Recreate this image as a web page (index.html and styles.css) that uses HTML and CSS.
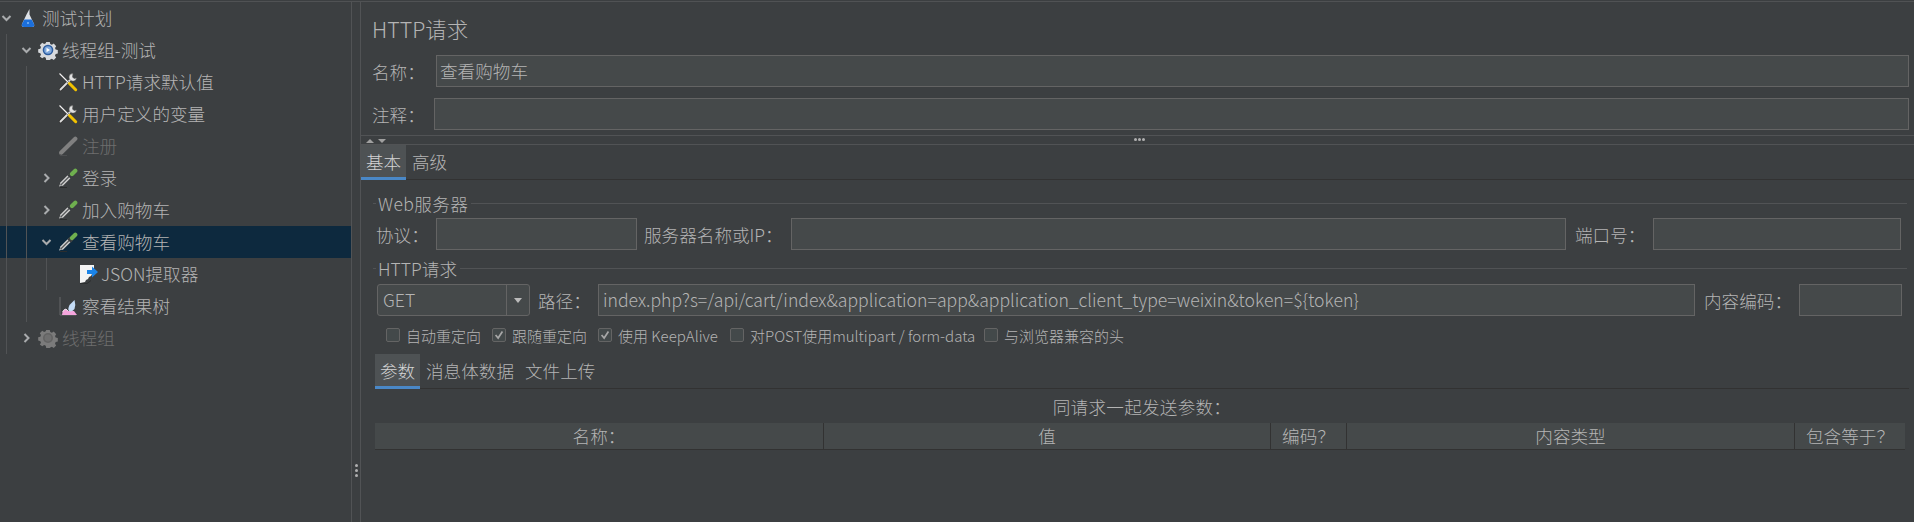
FILE: index.html
```html
<!DOCTYPE html>
<html lang="zh">
<head>
<meta charset="utf-8">
<title>HTTP请求</title>
<link rel="stylesheet" href="styles.css">
</head>
<body>
<svg class="defs" width="0" height="0" aria-hidden="true">
  <defs>
    <symbol id="chev-down" viewBox="0 0 12 12"><path d="M2 4l4 4 4-4" fill="none" stroke="#a9abad" stroke-width="2"/></symbol>
    <symbol id="chev-right" viewBox="0 0 12 12"><path d="M4 2l4 4-4 4" fill="none" stroke="#a9abad" stroke-width="2"/></symbol>
    <symbol id="flask" viewBox="0 0 20 20">
      <path d="M8.500 6.500L11.500 1v5.500L16 16q1 3-2 3H6q-3 0-2-3z" fill="#dde1e6"/>
      <path d="M6.300 11.500h7.400L16 16q1 3-2 3H6q-3 0-2-3z" fill="#1b6fdc"/>
      <circle cx="10" cy="15" r="1" fill="#7fb6f2"/>
    </symbol>
    <symbol id="gear" viewBox="0 0 20 20">
      <path d="M8 1h4l.5 2.400 1.800.8 2.100-1.300 2.700 2.800-1.300 2 .7 1.800 2.400.6v3.800l-2.400.6-.7 1.800 1.300 2-2.700 2.800-2.100-1.300-1.800.8L12 21H8l-.5-2.400-1.800-.8-2.100 1.300L.9 17.300l1.300-2-.7-1.800L-.9 12.900V9.100l2.400-.6.700-1.800-1.300-2L3.600 1.900l2.100 1.300 1.800-.8z" transform="translate(1 1) scale(.9)" fill="#d7d9dc"/>
      <circle cx="10" cy="10" r="5.300" fill="#2d5c9e"/>
      <circle cx="10" cy="10" r="3.800" fill="#7fa8dc"/>
      <path d="M8.500 7.800l3.600 2.200-3.600 2.200z" fill="#fff"/>
    </symbol>
    <symbol id="gear-off" viewBox="0 0 20 20">
      <path d="M8 1h4l.5 2.400 1.800.8 2.100-1.300 2.700 2.800-1.300 2 .7 1.800 2.400.6v3.800l-2.400.6-.7 1.800 1.300 2-2.700 2.800-2.100-1.300-1.800.8L12 21H8l-.5-2.400-1.800-.8-2.100 1.300L.9 17.300l1.300-2-.7-1.800L-.9 12.900V9.100l2.400-.6.700-1.800-1.300-2L3.600 1.900l2.100 1.300 1.800-.8z" transform="translate(1 1) scale(.9)" fill="#7b7b7b"/>
      <circle cx="10" cy="10" r="5" fill="#636363"/>
      <circle cx="10" cy="10" r="3.400" fill="#6f6f6f"/>
    </symbol>
    <symbol id="tools" viewBox="0 0 20 20">
      <path d="M2.500 17.500L12 8" stroke="#333" stroke-width="3.200" stroke-linecap="round"/>
      <path d="M2.500 17.500L12 8" stroke="#dedede" stroke-width="1.800" stroke-linecap="round"/>
      <path d="M15 1.500a3.800 3.800 0 1 0 3.500 4.500l-2.500.5-1.500-1.500z" fill="#e2e2e2" stroke="#555" stroke-width=".6"/>
      <path d="M1.500 1.500l9.500 9.500" stroke="#333" stroke-width="2.200"/>
      <path d="M1.500 1.500l9.500 9.500" stroke="#f1f1f1" stroke-width="1.200"/>
      <path d="M11.500 11.500l6.200 6.200" stroke="#f2c200" stroke-width="3" stroke-linecap="round"/>
    </symbol>
    <symbol id="pipette" viewBox="0 0 20 20">
      <path d="M1 18.500l1.300-3.200 2.300 2.300z" fill="#c8c8c8"/>
      <path d="M3.300 16.500l9-9" stroke="#d0d0d0" stroke-width="4"/>
      <path d="M2.500 17.200l9.500-9.500" stroke="#55585a" stroke-width="1.300"/>
      <path d="M11 9l2.500-2.500" stroke="#3a3d3f" stroke-width="5"/>
      <path d="M14 6l3.300-3.300" stroke="#6fb04f" stroke-width="4.200" stroke-linecap="round"/>
      <path d="M2 19.500h7" stroke="#2b2d2e" stroke-width="1"/>
    </symbol>
    <symbol id="pipette-off" viewBox="0 0 20 20">
      <path d="M1 18.500l1.300-3.200 2.300 2.300z" fill="#787878"/>
      <path d="M3.300 16.500L17.300 2.700" stroke="#808080" stroke-width="4.200" stroke-linecap="round"/>
      <path d="M2 19.500h7" stroke="#4c4e50" stroke-width="1"/>
    </symbol>
    <symbol id="doc" viewBox="0 0 20 20">
      <path d="M2 1h14v8l-2 1-1 2-2 1-1 2-2 1-1 2-5 1z" fill="#f4f4f4"/>
      <path d="M2 19.500h7l4-3" fill="none" stroke="#2c2e2f" stroke-width="1"/>
      <path d="M14 2.500L20 8l-6 5.500V10H9V6h5z" fill="#1b84e8"/>
    </symbol>
    <symbol id="chart" viewBox="0 0 20 20">
      <path d="M2 1v18h16" fill="none" stroke="#66686a" stroke-width="1"/>
      <path d="M4 19l.5-3q1.500-3 3.500-3l2 2h6l3 4z" fill="#f4a5dc"/>
      <path d="M4.500 16q1.500-3 3.500-3l2 2" fill="none" stroke="#fff" stroke-width=".8"/>
      <path d="M11 15q-1.500-2 .5-6l5-5q1.500 5 0 9-2.500 3.500-5.500 2z" fill="#c4dcf6"/>
    </symbol>
  </defs>
</svg>

<div class="app">
  <nav class="tree">
    <div class="row l0"><svg class="chev"><use href="#chev-down"/></svg><svg class="ico"><use href="#flask"/></svg><span class="txt">测试计划</span></div>
    <div class="kids g0">
      <div class="row l1"><svg class="chev"><use href="#chev-down"/></svg><svg class="ico"><use href="#gear"/></svg><span class="txt">线程组-测试</span></div>
      <div class="kids g1">
        <div class="row l2"><span class="chev"></span><svg class="ico"><use href="#tools"/></svg><span class="txt">HTTP请求默认值</span></div>
        <div class="row l2"><span class="chev"></span><svg class="ico"><use href="#tools"/></svg><span class="txt">用户定义的变量</span></div>
        <div class="row l2 off"><span class="chev"></span><svg class="ico"><use href="#pipette-off"/></svg><span class="txt">注册</span></div>
        <div class="row l2"><svg class="chev"><use href="#chev-right"/></svg><svg class="ico"><use href="#pipette"/></svg><span class="txt">登录</span></div>
        <div class="row l2"><svg class="chev"><use href="#chev-right"/></svg><svg class="ico"><use href="#pipette"/></svg><span class="txt">加入购物车</span></div>
        <div class="row l2 sel"><svg class="chev"><use href="#chev-down"/></svg><svg class="ico"><use href="#pipette"/></svg><span class="txt">查看购物车</span></div>
        <div class="kids g2">
          <div class="row l3"><span class="chev"></span><svg class="ico"><use href="#doc"/></svg><span class="txt">JSON提取器</span></div>
        </div>
        <div class="row l2"><span class="chev"></span><svg class="ico"><use href="#chart"/></svg><span class="txt">察看结果树</span></div>
      </div>
      <div class="row l1 off"><svg class="chev"><use href="#chev-right"/></svg><svg class="ico"><use href="#gear-off"/></svg><span class="txt">线程组</span></div>
    </div>
  </nav>

  <div class="vsplit"><i></i><i></i><i></i></div>

  <main class="panel">
    <h1 class="title">HTTP请求</h1>
    <div class="form-row name-row"><label class="lbl-name">名称：</label><div class="field grow name-field">查看购物车</div></div>
    <div class="form-row note-row"><label class="lbl-note">注释：</label><div class="field grow"></div></div>

    <div class="hsplit">
      <span class="arrows"><i class="up"></i><i class="down"></i></span>
      <span class="hdots"><i></i><i></i><i></i></span>
    </div>

    <div class="tabs main-tabs"><div class="tab on">基本</div><div class="tab">高级</div></div>

    <section class="body">
      <div class="legend web"><span>Web服务器</span></div>
      <div class="form-row server-row">
        <label class="w-proto">协议：</label><div class="field f-proto"></div>
        <label class="w-host">服务器名称或IP：</label><div class="field f-host"></div>
        <label class="w-port">端口号：</label><div class="field f-port"></div>
      </div>

      <div class="legend http"><span>HTTP请求</span></div>
      <div class="form-row path-row">
        <div class="combo"><span class="combo-val">GET</span><span class="combo-btn"><i></i></span></div>
        <label class="w-path">路径：</label>
        <div class="field f-path">index.php?s=/api/cart/index&amp;application=app&amp;application_client_type=weixin&amp;token=${token}</div>
        <label class="w-enc">内容编码：</label><div class="field f-enc"></div>
      </div>

      <div class="checks">
        <div class="chk c1"><span class="box"></span>自动重定向</div>
        <div class="chk c2"><span class="box"><svg viewBox="0 0 14 14"><path d="M3 7l3 3.500L11 3" fill="none" stroke="#a7a7a7" stroke-width="2"/></svg></span>跟随重定向</div>
        <div class="chk c3"><span class="box"><svg viewBox="0 0 14 14"><path d="M3 7l3 3.500L11 3" fill="none" stroke="#a7a7a7" stroke-width="2"/></svg></span>使用 KeepAlive</div>
        <div class="chk c4"><span class="box"></span>对POST使用multipart / form-data</div>
        <div class="chk c5"><span class="box"></span>与浏览器兼容的头</div>
      </div>

      <div class="tabs sub-tabs"><div class="tab on">参数</div><div class="tab t2">消息体数据</div><div class="tab t3">文件上传</div></div>

      <div class="caption">同请求一起发送参数：</div>
      <div class="thead">
        <div class="th c-name">名称：</div>
        <div class="th c-val">值</div>
        <div class="th c-enc">编码？</div>
        <div class="th c-type">内容类型</div>
        <div class="th c-inc">包含等于？</div>
      </div>
    </section>
  </main>
</div>
</body>
</html>
```

FILE: styles.css
```css
* { box-sizing: border-box; }
html, body { margin: 0; height: 100%; }
body {
  background: #3c3f41;
  color: #b4b4b4;
  font-family: "Noto Sans CJK SC", "Noto Sans", sans-serif;
  font-size: 17.6px;
  font-weight: 300;
  overflow: hidden;
}
.defs { position: absolute; }
.app {
  display: flex;
  height: 522px;
  margin-top: 1px;
  border-top: 1px solid #505254;
}

/* tree */
.tree { width: 352px; border-right: 1px solid #515355; flex: none; }
.row { display: flex; align-items: center; height: 32px; white-space: nowrap; }
.l0 { padding-left: 0; }
.l1 { padding-left: 20px; }
.l2 { padding-left: 40px; }
.l3 { padding-left: 60px; }
.txt { margin-left: 4px; padding-bottom: 2px; }
.l3 .txt { margin-left: 3px; }
.chev { width: 13px; height: 12px; margin-right: 5px; flex: none; display: block; }
.ico { width: 20px; height: 20px; flex: none; }
.off { color: #6e6e6e; }
.sel { background: #0d293e; }
.kids { position: relative; }
.kids::before { content: ""; position: absolute; top: 0; bottom: 0; width: 1px; background: #515355; z-index: 1; }
.g0::before { left: 6px; }
.g1::before { left: 26px; }
.g2::before { left: 46px; }

/* vertical splitter */
.vsplit {
  width: 8px; flex: none;
  display: flex; flex-direction: column; align-items: center; justify-content: flex-start; gap: 2px;
  padding-top: 462px;
  height: 522px;
}
.vsplit i { width: 3px; height: 3px; border-radius: 50%; background: #b0b0b0; }

/* right panel */
.panel { flex: 1; min-width: 0; border-left: 1px solid #515355; display: flex; flex-direction: column; padding-right: 5px; }
.title { margin: 0; height: 53px; padding: 12px 0 0 11px; font-size: 21.4px; font-weight: 300; line-height: 30px; }
.form-row { display: flex; align-items: center; height: 32px; white-space: nowrap; }
.field { height: 32px; background: #45494a; border: 1px solid #646464; padding-left: 4px; line-height: 30px; }
.name-field { padding-left: 3px; }
.grow { flex: 1; }
.name-row { padding-left: 11px; }
.name-row label { width: 64px; }
.note-row { padding-left: 11px; margin-top: 11px; }
.note-row label { width: 62px; }
.hsplit { height: 10px; margin-top: 5px; border-top: 1px solid #515355; border-bottom: 1px solid #515355; margin-right: -5px; display: flex; position: relative; }
.arrows { display: flex; gap: 4px; padding: 3px 0 0 5px; }
.arrows i { width: 0; height: 0; border-left: 4px solid transparent; border-right: 4px solid transparent; }
.arrows .up { border-bottom: 4px solid #a0a0a0; }
.arrows .down { border-top: 4px solid #a0a0a0; }
.hdots { position: absolute; left: 773px; top: 2px; display: flex; gap: 1px; }
.hdots i { width: 3px; height: 3px; border-radius: 50%; background: #b0b0b0; }

/* tabs */
.tabs { display: flex; height: 35px; border-bottom: 1px solid #323232; white-space: nowrap; }
.tab { height: 35px; padding: 0 6px; line-height: 34px; }
.tab.on { background: #4e5254; color: #d4d4d4; border-bottom: 3px solid #4a88c7; width: 45px; padding: 0; text-align: center; }
.main-tabs { margin-right: -5px; }
.sub-tabs { margin: 11px 0 0 14px; }
.sub-tabs .t3 { margin-left: -1px; }

/* body */
.body { display: flex; flex-direction: column; }
.legend { display: flex; align-items: center; height: 22px; margin: 12px 0 0 12px; padding-right: 2px; }
.legend::before { content: ""; width: 3px; height: 1px; background: #515355; margin-right: 2px; }
.legend::after { content: ""; flex: 1; height: 1px; background: #515355; margin-left: 3px; }
.web span { letter-spacing: .4px; }
.server-row { margin-top: 4px; padding-left: 15px; }
.http { margin-top: 7px; }
.path-row { margin-top: 5px; padding-left: 16px; }
.w-proto { width: 60px; }
.f-proto { width: 201px; }
.w-host { width: 147px; margin-left: 7px; }
.f-host { width: 775px; }
.w-port { width: 78px; margin-left: 9px; }
.f-port { width: 248px; }

.combo { width: 153px; height: 32px; background: #45494a; border: 1px solid #646464; border-radius: 3px; display: flex; }
.combo-val { flex: 1; padding-left: 5px; line-height: 30px; }
.combo-btn { width: 23px; border-left: 1px solid #646464; display: flex; align-items: center; justify-content: center; }
.combo-btn i { width: 0; height: 0; border-left: 4px solid transparent; border-right: 4px solid transparent; border-top: 5px solid #bbbbbb; }
.w-path { width: 60px; margin-left: 8px; }
.f-path { width: 1097px; }
.w-enc { width: 95px; margin-left: 9px; }
.f-enc { width: 103px; }

.checks { display: flex; align-items: center; height: 16px; margin-top: 11px; padding-left: 25px; font-size: 15px; white-space: nowrap; }
.chk { display: flex; align-items: center; }
.box { width: 14px; height: 14px; border: 1px solid #646464; border-radius: 2px; background: #43494a; margin-right: 6px; flex: none; display: block; }
.box svg { display: block; width: 12px; height: 12px; }
.c1 { width: 106px; }
.c2 { width: 106px; }
.c3 { width: 132px; }
.c4 { width: 254px; }

.caption { height: 34px; line-height: 36px; text-align: center; font-size: 17.6px; margin-left: 14px; letter-spacing: .25px; }
.thead { display: flex; height: 27px; margin-left: 14px; margin-right: 4px; background: #45494a; border-bottom: 1px solid #323232; line-height: 26px; }
.th { text-align: center; border-right: 1px solid #323232; flex: none; }
.c-name { width: 449px; }
.c-val { width: 447px; }
.c-enc { width: 76px; }
.c-type { width: 448px; }
.c-inc { flex: 1; border-right: none; }
```
